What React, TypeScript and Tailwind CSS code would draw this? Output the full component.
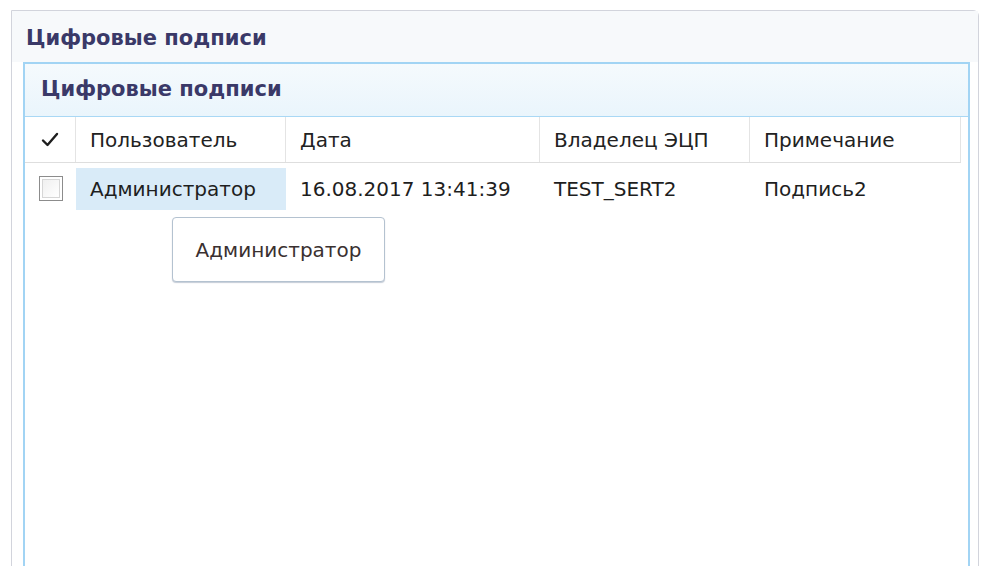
import React from "react";

type Signature = {
  user: string;
  date: string;
  owner: string;
  note: string;
};

const signatures: Signature[] = [
  { user: "Администратор", date: "16.08.2017 13:41:39", owner: "TEST_SERT2", note: "Подпись2" },
];

const columns = [
  { key: "user", title: "Пользователь", width: "w-[210px]" },
  { key: "date", title: "Дата", width: "w-[254px]" },
  { key: "owner", title: "Владелец ЭЦП", width: "w-[210px]" },
  { key: "note", title: "Примечание", width: "w-[211px]" },
] as const;

function CheckMark() {
  return (
    <svg width="18" height="15" viewBox="0 0 18 15" fill="none">
      <path d="M2 8.5 L6.5 13 L16 2" stroke="#1e1e1e" strokeWidth="2.4" strokeLinecap="round" strokeLinejoin="round" />
    </svg>
  );
}

function CheckBox() {
  return (
    <div className="h-[25px] w-[24px] border border-[#8c8c8c] bg-white p-[2px]">
      <div className="h-full w-full border border-[#d6d6d6] bg-gradient-to-br from-[#f0f0f0] to-white" />
    </div>
  );
}

export default function App() {
  return (
    <div
      className="relative h-[566px] w-[982px] overflow-hidden bg-white pl-[11px] pr-[3px] pt-[10px]"
      style={{ fontFamily: '"DejaVu Sans", Verdana, sans-serif' }}
    >
      <div className="flex h-[620px] flex-col rounded-tr-[6px] border border-[#d2d4dc] bg-white">
        <div className="flex h-[51px] items-center bg-[#f7f9fb] pl-[14px] pt-[4px]">
          <h1 className="text-[21px] font-bold text-[#3a3968]">Цифровые подписи</h1>
        </div>

        <div className="ml-[11px] mr-[8px] flex-1 border-2 border-[#a2d4f4]">
          <div className="flex h-[53px] items-center border-b border-[#a9d8f5] bg-gradient-to-b from-[#f5fafd] to-[#eaf5fc] pl-[16px]">
            <h2 className="text-[21px] font-bold text-[#3a3968]">Цифровые подписи</h2>
          </div>

          <div className="flex h-[46px] w-[936px] items-center border-b border-[#dedede] text-[20px] text-[#222]">
            <div className="flex h-full w-[51px] items-center justify-center border-r border-[#e4e4e4]">
              <CheckMark />
            </div>
            {columns.map((col) => (
              <div
                key={col.key}
                className={`flex h-full items-center border-r border-[#e4e4e4] pl-[14px] ${col.width}`}
              >
                {col.title}
              </div>
            ))}
          </div>

          {signatures.map((row) => (
            <div key={row.date} className="flex h-[49px] w-[936px] items-center pt-[2px] text-[20px] text-[#1e1e1e]">
              <div className="flex h-full w-[51px] items-center justify-center">
                <CheckBox />
              </div>
              <div className="flex h-[42px] w-[210px] items-center bg-[#d9ebf8] pl-[14px]">{row.user}</div>
              <div className="flex h-full w-[254px] items-center pl-[14px]">{row.date}</div>
              <div className="flex h-full w-[210px] items-center pl-[14px]">{row.owner}</div>
              <div className="flex h-full w-[211px] items-center pl-[14px]">{row.note}</div>
            </div>
          ))}
        </div>
      </div>

      {/* hover hint over the user cell */}
      <div className="absolute left-[172px] top-[217px] flex h-[65px] w-[213px] items-center justify-center rounded-[4px] border border-[#b4c2d0] bg-white text-[20px] text-[#3a3030] shadow-[0_1px_1px_rgba(90,110,140,0.35)]">
        Администратор
      </div>
    </div>
  );
}
